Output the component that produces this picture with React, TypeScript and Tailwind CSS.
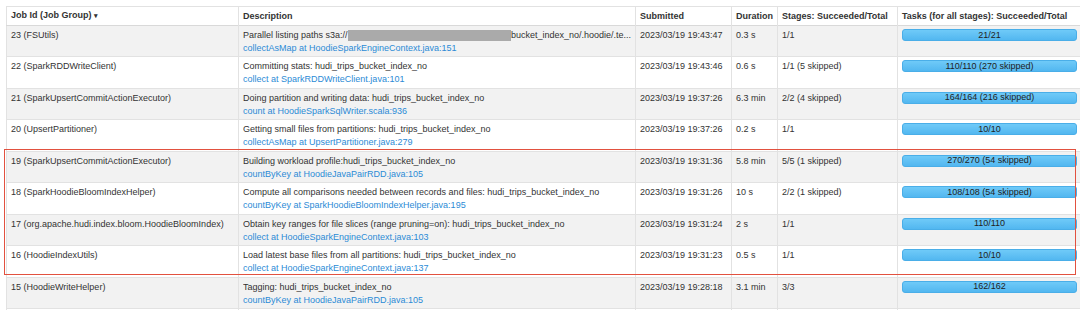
import React from "react";

type Job = {
  id: string;
  desc: React.ReactNode;
  link: string;
  submitted: string;
  duration: string;
  stages: string;
  tasks: string;
};

const jobs: Job[] = [
  {
    id: "23 (FSUtils)",
    desc: (
      <span className="flex items-center whitespace-nowrap">
        Parallel listing paths s3a://
        <span className="inline-block w-[166px] h-[11px] bg-[#aaaaaa]" />
        bucket_index_no/.hoodie/.te...
      </span>
    ),
    link: "collectAsMap at HoodieSparkEngineContext.java:151",
    submitted: "2023/03/19 19:43:47",
    duration: "0.3 s",
    stages: "1/1",
    tasks: "21/21",
  },
  {
    id: "22 (SparkRDDWriteClient)",
    desc: "Committing stats: hudi_trips_bucket_index_no",
    link: "collect at SparkRDDWriteClient.java:101",
    submitted: "2023/03/19 19:43:46",
    duration: "0.6 s",
    stages: "1/1 (5 skipped)",
    tasks: "110/110 (270 skipped)",
  },
  {
    id: "21 (SparkUpsertCommitActionExecutor)",
    desc: "Doing partition and writing data: hudi_trips_bucket_index_no",
    link: "count at HoodieSparkSqlWriter.scala:936",
    submitted: "2023/03/19 19:37:26",
    duration: "6.3 min",
    stages: "2/2 (4 skipped)",
    tasks: "164/164 (216 skipped)",
  },
  {
    id: "20 (UpsertPartitioner)",
    desc: "Getting small files from partitions: hudi_trips_bucket_index_no",
    link: "collectAsMap at UpsertPartitioner.java:279",
    submitted: "2023/03/19 19:37:26",
    duration: "0.2 s",
    stages: "1/1",
    tasks: "10/10",
  },
  {
    id: "19 (SparkUpsertCommitActionExecutor)",
    desc: "Building workload profile:hudi_trips_bucket_index_no",
    link: "countByKey at HoodieJavaPairRDD.java:105",
    submitted: "2023/03/19 19:31:36",
    duration: "5.8 min",
    stages: "5/5 (1 skipped)",
    tasks: "270/270 (54 skipped)",
  },
  {
    id: "18 (SparkHoodieBloomIndexHelper)",
    desc: "Compute all comparisons needed between records and files: hudi_trips_bucket_index_no",
    link: "countByKey at SparkHoodieBloomIndexHelper.java:195",
    submitted: "2023/03/19 19:31:26",
    duration: "10 s",
    stages: "2/2 (1 skipped)",
    tasks: "108/108 (54 skipped)",
  },
  {
    id: "17 (org.apache.hudi.index.bloom.HoodieBloomIndex)",
    desc: "Obtain key ranges for file slices (range pruning=on): hudi_trips_bucket_index_no",
    link: "collect at HoodieSparkEngineContext.java:103",
    submitted: "2023/03/19 19:31:24",
    duration: "2 s",
    stages: "1/1",
    tasks: "110/110",
  },
  {
    id: "16 (HoodieIndexUtils)",
    desc: "Load latest base files from all partitions: hudi_trips_bucket_index_no",
    link: "collect at HoodieSparkEngineContext.java:137",
    submitted: "2023/03/19 19:31:23",
    duration: "0.5 s",
    stages: "1/1",
    tasks: "10/10",
  },
  {
    id: "15 (HoodieWriteHelper)",
    desc: "Tagging: hudi_trips_bucket_index_no",
    link: "countByKey at HoodieJavaPairRDD.java:105",
    submitted: "2023/03/19 19:28:18",
    duration: "3.1 min",
    stages: "3/3",
    tasks: "162/162",
  },
  // next row only peeks in below the fold, no text visible
  {
    id: "",
    desc: "",
    link: "",
    submitted: "",
    duration: "",
    stages: "",
    tasks: "",
  },
];

const th = "h-[19px] px-[4px] py-0 text-left font-bold border-l border-[#e2e2e2] first:border-l-0 whitespace-nowrap";
const td = "h-[31.45px] px-[4px] pt-[3px] pb-0 align-top border-l border-[#e2e2e2] first:border-l-0 whitespace-nowrap";

function Progress({ label }: { label: string }) {
  return (
    <div className="h-[12px] rounded-[3px] bg-gradient-to-b from-[#6fcaf8] to-[#52b7f0] border border-[#4aaee8] flex items-center justify-center text-[9px] leading-none text-[#222]">
      {label}
    </div>
  );
}

export default function App() {
  return (
    <div className="w-[1080px] h-[310px] overflow-hidden bg-white">
      <div className="relative pl-[6px] pt-[6px]">
        <table
          className="table-fixed border-collapse w-[1074px] text-[9px] leading-[13px] text-[#333] border-l border-t border-[#e2e2e2]"
          style={{ fontFamily: '"Liberation Sans", Arial, sans-serif' }}
        >
          <colgroup>
            <col className="w-[232px]" />
            <col className="w-[397px]" />
            <col className="w-[96px]" />
            <col className="w-[46px]" />
            <col className="w-[120px]" />
            <col />
          </colgroup>
          <thead>
            <tr className="bg-white border-b border-[#d9d9d9]">
              <th className={th}>
                Job Id (Job Group) <span className="text-[7px] align-middle">▾</span>
              </th>
              <th className={th}>Description</th>
              <th className={th}>Submitted</th>
              <th className={th}>Duration</th>
              <th className={th}>Stages: Succeeded/Total</th>
              <th className={th}>Tasks (for all stages): Succeeded/Total</th>
            </tr>
          </thead>
          <tbody>
            {jobs.map((j, i) => (
              <tr
                key={i}
                className={`border-b border-[#e2e2e2] ${i % 2 === 0 ? "bg-[#f2f2f2]" : "bg-white"}`}
              >
                <td className={td}>{j.id}</td>
                <td className={td}>
                  <div className="overflow-hidden">{j.desc}</div>
                  <a className="text-[#2b8bd6] block">{j.link}</a>
                </td>
                <td className={td}>{j.submitted}</td>
                <td className={td}>{j.duration}</td>
                <td className={td}>{j.stages}</td>
                <td className={`${td} pr-[3px]`}>{j.tasks && <Progress label={j.tasks} />}</td>
              </tr>
            ))}
          </tbody>
        </table>
        <div className="absolute left-[4px] top-[149px] w-[1072px] h-[126px] border-[1.5px] border-[#e2513f] pointer-events-none" />
      </div>
    </div>
  );
}
